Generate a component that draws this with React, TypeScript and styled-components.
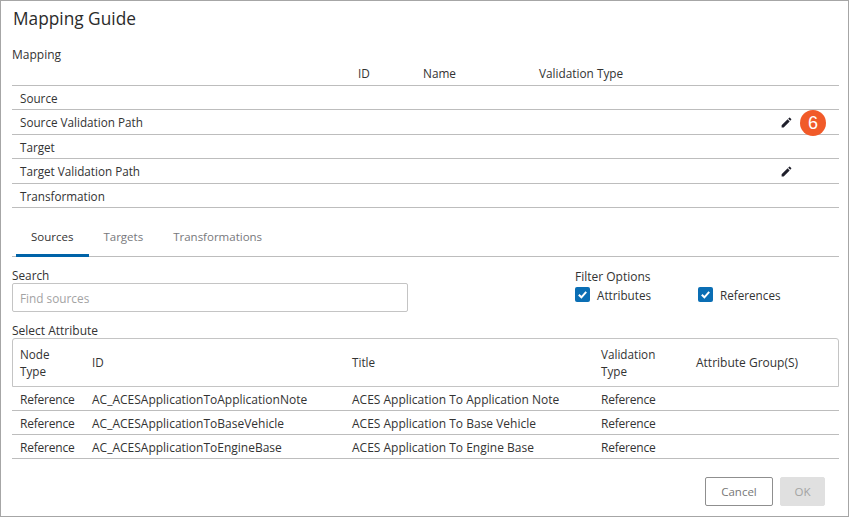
import React from "react";
import styled, { createGlobalStyle } from "styled-components";
import { MdEdit } from "react-icons/md";

const GlobalStyle = createGlobalStyle`
  html, body {
    margin: 0;
    padding: 0;
    background: #fff;
  }
  * {
    box-sizing: border-box;
  }
`;

const Dialog = styled.div`
  position: relative;
  width: 849px;
  height: 517px;
  overflow: hidden;
  display: flex;
  flex-direction: column;
  padding: 0 9px 0 11px;
  background: #fff;
  border: 1px solid #a6a6a6;
  font-family: "Open Sans", "Noto Sans", sans-serif;
  font-size: 11.5px;
  color: #333;
`;

const Title = styled.h1`
  margin: 0;
  height: 45px;
  padding-left: 1px;
  font-size: 17.3px;
  font-weight: 400;
  line-height: 36px;
  color: #2b2b2b;
`;

const FieldLabel = styled.div`
  height: 18px;
  font-size: 12px;
  line-height: 18px;
`;

const MappingHead = styled.div`
  display: grid;
  grid-template-columns: 346px 65px 116px 1fr;
  height: 22px;
  padding-top: 1px;
  font-size: 11.8px;
  line-height: 16px;
  border-bottom: 1px solid #bdbdbd;
  span:first-child {
    grid-column: 2;
  }
`;

const MappingRow = styled.div<{ $h: number }>`
  position: relative;
  display: flex;
  align-items: center;
  justify-content: space-between;
  height: ${(p) => p.$h}px;
  padding: 0 46px 0 8px;
  font-size: 11.7px;
  border-bottom: 1px solid #bdbdbd;
`;

const EditIcon = styled(MdEdit)`
  display: block;
  color: #1f1f2b;
`;

const Badge = styled.div`
  position: absolute;
  right: 13px;
  top: 0;
  width: 26px;
  height: 26px;
  border-radius: 50%;
  display: flex;
  align-items: center;
  justify-content: center;
  background: #f15a29;
  color: #fff;
  font-family: "Liberation Sans", Arial, sans-serif;
  font-size: 18px;
`;

const TabBar = styled.div`
  display: flex;
  height: 49px;
  padding-left: 4px;
  border-bottom: 1px solid #bdbdbd;
`;

const Tab = styled.div<{ $active?: boolean }>`
  height: 49px;
  padding: 15px 16px 0 ${(p) => (p.$active ? 15 : 14)}px;
  line-height: 28px;
  color: ${(p) => (p.$active ? "#333" : "#77787c")};
  border-bottom: 3px solid ${(p) => (p.$active ? "#0063a8" : "transparent")};
`;

const FilterRow = styled.div`
  display: grid;
  grid-template-columns: 563px 1fr;
  height: 56px;
  padding-top: 10px;
`;

const SearchLabel = styled.div`
  height: 16px;
  font-size: 11.8px;
  line-height: 16px;
`;

const SearchInput = styled.input`
  display: block;
  width: 396px;
  height: 29px;
  padding: 0 7px;
  border: 1px solid #c4c4c4;
  border-radius: 2px;
  font: inherit;
  font-size: 11.8px;
  outline: none;
  &::placeholder {
    color: #a3a3a3;
    opacity: 1;
  }
`;

const FilterTitle = styled.div`
  height: 18px;
  padding-top: 1px;
  font-size: 12px;
  line-height: 18px;
`;

const Checks = styled.div`
  display: flex;
  margin-top: 2px;
`;

const CheckItem = styled.label`
  display: flex;
  align-items: center;
  gap: 7px;
  width: 123px;
  height: 15px;
  font-size: 11.7px;
`;

const CheckBox = styled.span`
  width: 15px;
  height: 15px;
  border-radius: 2px;
  background: #0a6eb4;
  display: flex;
  align-items: center;
  justify-content: center;
`;

const AttrLabel = styled.div`
  height: 15px;
  margin-top: 10px;
  font-size: 12px;
  line-height: 16px;
`;

const AttrHead = styled.div`
  display: grid;
  grid-template-columns: 72px 260px 249px 95px 1fr;
  align-items: center;
  height: 49px;
  padding-left: 7px;
  font-size: 11.7px;
  line-height: 17px;
  border: 1px solid #c4c4c4;
  border-radius: 3px 3px 0 0;
`;

const GroupHead = styled.span`
  font-size: 12px;
`;

const AttrRow = styled.div`
  display: grid;
  grid-template-columns: 72px 260px 249px 95px 1fr;
  align-items: center;
  height: 24px;
  padding: 1px 0 0 8px;
  font-size: 12px;
  border-bottom: 1px solid #bdbdbd;
`;

const TypeCell = styled.span`
  letter-spacing: -0.2px;
`;

const Footer = styled.div`
  display: flex;
  justify-content: flex-end;
  gap: 7px;
  margin-top: 18px;
  padding-right: 14px;
`;

const Button = styled.div<{ $primary?: boolean }>`
  height: 29px;
  display: flex;
  align-items: center;
  justify-content: center;
  width: ${(p) => (p.$primary ? 45 : 68)}px;
  border: 1px solid ${(p) => (p.$primary ? "#e0e0e0" : "#8f8f8f")};
  border-radius: 2px;
  background: ${(p) => (p.$primary ? "#e0e0e0" : "#fff")};
  color: ${(p) => (p.$primary ? "#a3a3a3" : "#777")};
`;

const mappingRows = [
  { label: "Source", h: 24 },
  { label: "Source Validation Path", h: 25, edit: true, badge: true },
  { label: "Target", h: 24 },
  { label: "Target Validation Path", h: 25, edit: true },
  { label: "Transformation", h: 24 },
];

const attributes = [
  ["AC_ACESApplicationToApplicationNote", "ACES Application To Application Note"],
  ["AC_ACESApplicationToBaseVehicle", "ACES Application To Base Vehicle"],
  ["AC_ACESApplicationToEngineBase", "ACES Application To Engine Base"],
];

const Check = ({ label }: { label: string }) => (
  <CheckItem>
    <CheckBox>
      <svg width="11" height="11" viewBox="0 0 11 11">
        <path d="M1.8 5.8 4.4 8.3 9.2 2.9" fill="none" stroke="#fff" strokeWidth="2" />
      </svg>
    </CheckBox>
    {label}
  </CheckItem>
);

export default function App() {
  return (
    <Dialog>
      <GlobalStyle />
      <Title>Mapping Guide</Title>
      <FieldLabel>Mapping</FieldLabel>
      <MappingHead>
        <span>ID</span>
        <span>Name</span>
        <span>Validation Type</span>
      </MappingHead>
      {mappingRows.map((row) => (
        <MappingRow key={row.label} $h={row.h}>
          {row.label}
          {row.edit && <EditIcon size={13} />}
          {row.badge && <Badge>6</Badge>}
        </MappingRow>
      ))}
      <TabBar>
        <Tab $active>Sources</Tab>
        <Tab>Targets</Tab>
        <Tab>Transformations</Tab>
      </TabBar>
      <FilterRow>
        <div>
          <SearchLabel>Search</SearchLabel>
          <SearchInput placeholder="Find sources" readOnly />
        </div>
        <div>
          <FilterTitle>Filter Options</FilterTitle>
          <Checks>
            <Check label="Attributes" />
            <Check label="References" />
          </Checks>
        </div>
      </FilterRow>
      <AttrLabel>Select Attribute</AttrLabel>
      <AttrHead>
        <span>Node<br />Type</span>
        <span>ID</span>
        <span>Title</span>
        <span>Validation<br />Type</span>
        <GroupHead>Attribute Group(S)</GroupHead>
      </AttrHead>
      {attributes.map(([id, title]) => (
        <AttrRow key={id}>
          <TypeCell>Reference</TypeCell>
          <span>{id}</span>
          <span>{title}</span>
          <TypeCell>Reference</TypeCell>
        </AttrRow>
      ))}
      <Footer>
        <Button>Cancel</Button>
        <Button $primary>OK</Button>
      </Footer>
    </Dialog>
  );
}
